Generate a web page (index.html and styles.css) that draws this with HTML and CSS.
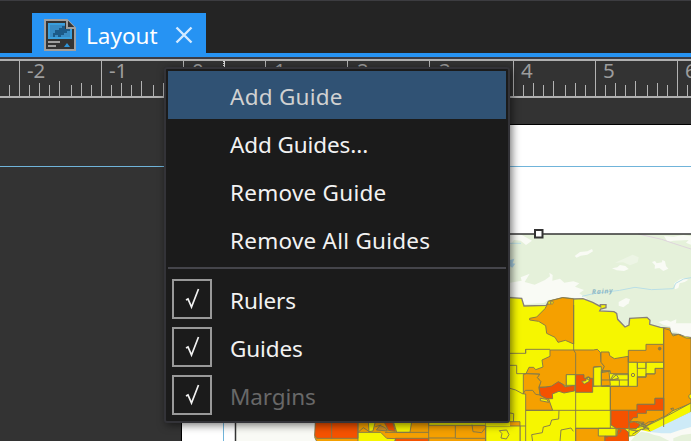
FILE: index.html
```html
<!DOCTYPE html>
<html lang="en">
<head>
<meta charset="utf-8">
<title>Layout</title>
<link rel="stylesheet" href="styles.css">
</head>
<body>
<div class="app">
  <header class="tabs">
    <div class="tab">
      <svg class="tab-icon" width="32" height="32" viewBox="0 0 32 32">
        <path d="M1 1H23L31 9V31H1Z" fill="#333" stroke="#a0a0a0" stroke-width="2"/>
        <path d="M4 4H21V10H28V20H4Z" fill="#3a9fdd"/>
        <path d="M6 6H21V10H26V18H6Z" fill="#388bc4"/>
        <path d="M11 11H15V9H18V7H21V10H26V12H23V14H20V16H17V18H14V16H11V18H9V14H11Z" fill="#1c5a88"/>
        <path d="M23 1V9H31" fill="#333" stroke="#a0a0a0" stroke-width="2"/>
        <path d="M24 2L30 8H24Z" fill="#333"/>
        <path d="M4 23H16M4 27H12" stroke="#a0a0a0" stroke-width="2"/>
        <path d="M20 28L23 24L26 28Z" fill="#2d95db"/>
      </svg>
      <span class="tab-title">Layout</span>
      <svg class="close" width="18" height="18" viewBox="0 0 18 18"><path d="M1.500 1.500L16.500 16.500M16.500 1.500L1.500 16.500" stroke="#d4eaff" stroke-width="2.400"/></svg>
    </div>
  </header>
  <div class="ruler">
    <svg width="691" height="39" viewBox="0 0 691 39">
      <defs>
        <g id="inch" fill="#b3b3b3">
          <path d="M0 2h1v36h-1zM10 26h1v11h-1zM20 24h1v13h-1zM30 26h1v11h-1zM40 22h1v15h-1zM52 26h1v11h-1zM62 24h1v13h-1zM72 26h1v11h-1z"/>
        </g>
      </defs>
      <use href="#inch" x="-63"/><use href="#inch" x="19"/><use href="#inch" x="101"/><use href="#inch" x="183"/><use href="#inch" x="265"/><use href="#inch" x="347"/><use href="#inch" x="429"/><use href="#inch" x="513"/><use href="#inch" x="595"/><use href="#inch" x="677"/>
      <path d="M0 1H691M0 38H691" stroke="#b0b0b0" stroke-width="2"/>
      <path d="M224.500 2V8" stroke="#ddd" stroke-width="1"/><path d="M223.500 2V8" stroke="#ddd" stroke-width="1" stroke-dasharray="1 1"/>
      <g class="ruler-text">
        <text x="27" y="19">-2</text><text x="109" y="19">-1</text><text x="192" y="19">0</text><text x="274" y="19">1</text><text x="357" y="19">2</text><text x="439" y="19">3</text><text x="521" y="19">4</text><text x="603" y="19">5</text><text x="685" y="19">6</text>
      </g>
    </svg>
  </div>
  <main class="canvas">
    <svg width="691" height="343" viewBox="0 98 691 343">
      <rect x="181" y="124" width="520" height="330" fill="#000"/>
      <rect x="182" y="125" width="520" height="330" fill="#fff"/>
      <path d="M0 166.500H691M223.500 125V441" stroke="#70b4da" fill="none"/>
      <rect x="235" y="234" width="470" height="220" fill="#f9faf5"/>
      <g transform="translate(500 220) scale(.33333)">
        <path fill="#e5f1da" d="M0 42H573V450H0Z"/>
        <g fill="#f9fbf5">
          <path d="M30 42H60L75 50 96 62 78 75 62 62 42 60 30 75Z"/>
          <path d="M224 108L240 96 262 94 276 87 279 94 262 104 242 107 230 113Z"/>
          <path d="M336 145L352 142 360 135 376 138 386 147 372 153 350 151Z"/>
          <path d="M456 126L465 123 470 130 486 127 487 120 495 124 498 138 505 146 490 153 478 144 464 146 465 136Z"/>
          <path d="M30 188L65 182 62 172 89 161 74 186 104 194 135 180 150 169 148 158 158 165 157 182 180 176 193 188 220 184 238 190 225 200 252 210 238 220 264 238 205 232 144 240 132 249 70 253 67 234 30 229Z"/>
          <path d="M492 48L520 50 550 45 573 49V74L558 68 566 60 520 62 503 66Z"/>
          <path d="M523 190L540 178 551 175 565 179 554 186 539 190 535 204 525 208Z"/>
          <path d="M356 246L378 234 390 238 386 250 370 262 356 257Z"/>
          <path d="M475 306L500 300 512 305 529 298 528 310 508 319 489 314Z"/>
        </g>
        <path d="M345 128L398 104 416 112 413 127 390 136 370 127Z" fill="#edf5e5"/>
        <path d="M30 70H63M246 229L285 220 359 211 405 202 454 209 520 206 527 190 551 177 573 173" stroke="#b9dfe7" stroke-width="3" fill="none"/>
        <path d="M30 120L43 116 38 130 46 131 37 143 30 139Z" fill="#a9d1e4"/>
        <path d="M415 42L485 58 520 70 548 79 573 87" stroke="#ded4dc" stroke-width="3" fill="none"/>
        <text class="river" x="276" y="223" transform="rotate(-4 276 223)">Rainy</text>
        <path d="M-100 233H30L65 235 72 258 139 256 146 244 188 233 221 237 249 236 278 247 302 260 301 254 318 254 318 263 302 267 299 273 342 275 350 280 353 298 375 321 387 315 389 295 441 292 450 301 449 313 481 322 510 325 511 342 540 344 573 352V670H-100Z" fill="#f6f600" stroke="#888078" stroke-width="4"/>
        <path d="M140 257L148 243 188 233 221 237V372L196 361 174 367 165 352 140 340 137 317 116 304 89 300 89 295 110 291 135 266Z" fill="#f5a000" stroke="#8b7e43" stroke-width="3"/>
        <path d="M144 244h8v9h-8zM154 244l7 2-4 7-6-3z" fill="#f5d500" stroke="#847e5a" stroke-width="2"/>
        <path d="M491 325H509V357L491 340Z" fill="#f5a000"/>
      </g>
      <g transform="translate(500 325) scale(.33333)" stroke="#81784d" stroke-width="2.800" stroke-linejoin="round">
        <path d="M513 18L530 22 556 34 573 35V-5H509Z" fill="#f9faf5" stroke="none"/>
        <g fill="#f5a000">
          <path d="M150 75H280L292 73 301 82 303 110 313 125 305 143 327 139 331 181 280 184V127L303 125 281 126V184H226V149H199V184L176 171 164 184 118 187 121 170 112 157 119 147 78 146 87 127 101 127 107 134 129 126 126 105 150 94Z"/>
          <path d="M78 146L119 148 112 158 123 170 117 185 120 211 146 222 158 256H77V207H70V148Z"/>
          <path d="M303 81H327L329 92 343 101 385 94V146H331V139H306L313 124 303 112Z"/>
          <path d="M331 184H385V157H438V147H465V130H491V256H331Z"/>
          <path d="M385 76H438V58H491V112H385Z"/>
          <path d="M491 10L509 15 519 33 535 28 558 39 573 40V235L519 257 491 277Z"/>
          <path d="M385 256H412V238H465V220H491V275L462 289 440 302 411 290H385Z"/>
          <path d="M227 310H348V333H315V350H227Z"/>
        </g>
        <g fill="#f55200">
          <path d="M117 187H135L155 183 175 170 188 178 195 186 223 181V198L192 204 177 199 157 207 158 221 140 221 121 211Z"/>
          <path d="M226 149H252V160H278V202H226Z"/>
          <path d="M333 256H385V257H411V238H465V220H491V256H439V265H412V278H400L388 292 386 311 350 311 333 300Z"/>
          <path d="M354 310L373 311 385 322 387 350H315V333H351Z"/>
          <path d="M387 293L403 290 420 297 414 311H388Z"/>
        </g>
        <g fill="#f6f600">
          <path d="M199 149H226V181H199ZM281 127L304 125V183H281Z"/>
          <path d="M385 112H412V130H438V112H491V130H465V146H438V155H412V184H385ZM340 149H385V165H331Z"/>
          <path d="M295 310H348V333H295ZM121 220L140 223 146 232 121 227Z"/>
          <path d="M436 305L491 278 573 234V262L455 323Z"/>
          <path d="M387 313L408 312 420 300 438 307 422 318 403 333H387Z"/>
          <path d="M245 169L258 167 259 157 270 158 268 169 253 177Z"/>
          <path d="M573 206L566 212 568 220 573 222"/>
        </g>
        <path stroke="none" fill="#f9faf5" d="M387 350V335L405 332 424 315 447 320 573 305V350Z"/>
        <path stroke="none" fill="#cdeaf7" d="M449 321L573 260V306L538 316 512 325 485 325Z"/>
        <path stroke="none" fill="#e5f1da" d="M391 350L405 333 424 320 447 324 460 329 480 334 512 350ZM520 340L545 330 573 326V350H520Z"/>
        <g fill="none">
          <path d="M221 -60V75L227 85V350M30 85H77V73H150M77 73V85M30 121H50V146H78M30 190L47 195 69 207 76 196 98 196 107 208 120 210M77 256H331M331 184V256M331 256V310H227M77 256V350M30 303H77M177 256L176 282 155 285 150 301 130 306 127 323 95 329 98 350M180 350L183 315 213 309 220 319M0 318H28L24 335 4 338 1 350M30 264L41 266 40 303"/>
          <path d="M304 137H331M304 165H358V184H304V139M412 112V184M438 112V155M491 10V306M385 146V184H304M385 94V112M331 166L349 149 356 160 335 165M409 290L432 292 431 300 446 291 462 289M430 294L414 307 440 302M386 256V292M517 257L512 251 520 249 519 257"/>
          <path d="M421 296L438 302 447 311 423 313 405 322M391 315L413 318 397 328M428 293L430 308 439 307M259 159L267 167M315 333L323 339M354 312L364 317 356 327"/>
          <circle cx="399" cy="150" r="5"/><circle cx="479" cy="71" r="4" fill="#9b773c"/><circle cx="265" cy="159" r="4"/>
        </g>
      </g>
      <g transform="translate(300 400) scale(.33333)" stroke="#81784d" stroke-width="2.800">
        <path d="M47 65H660V130H53L44 112 47 94Z" fill="#f5a000"/>
        <path d="M46 65H174V115H50L44 106Z" fill="#f55200"/>
        <path d="M174 97H242L260 115 288 116 280 130H174ZM205 65H226L219 93 207 95ZM280 65H335L330 97H290L286 83ZM386 65H557V76H386ZM557 78H660V130H557Z" fill="#f6f600"/>
        <path d="M557 60H630V78H557Z" fill="#f6f600" stroke="none"/>
        <path d="M252 65H278L286 94 265 91ZM286 115H386V130H286Z" fill="#f55200"/>
        <path d="M95 65V115M174 65V115M386 65V130M466 78V114H386M466 115H557M557 76V130M516 74L519 95 545 98 555 85M255 97H386M174 97L190 83 208 95M598 92L620 90 627 104 619 117 603 114 606 101Z" fill="none"/>
        <path d="M226 80L240 76 257 84 262 93 229 90 242 74" fill="#cc8b27"/>
      </g>
      <path d="M235.500 450V234H700" fill="none" stroke="#343434" stroke-width="1.500"/>
      <rect x="535" y="230" width="7.500" height="7.500" fill="#fff" stroke="#333" stroke-width="2"/>
    </svg>
  </main>
  <div class="menu">
    <div class="item active"><span class="label">Add Guide</span></div>
    <div class="item"><span class="label compact">Add Guides...</span></div>
    <div class="item"><span class="label">Remove Guide</span></div>
    <div class="item"><span class="label">Remove All Guides</span></div>
    <div class="separator"></div>
    <div class="item"><span class="check"><svg width="36" height="36" viewBox="0 0 36 36"><path d="M12 19L14 18 17.500 26 24.500 8" /></svg></span><span class="label compact">Rulers</span></div>
    <div class="item"><span class="check"><svg width="36" height="36" viewBox="0 0 36 36"><path d="M12 19L14 18 17.500 26 24.500 8" /></svg></span><span class="label compact">Guides</span></div>
    <div class="item disabled"><span class="check"><svg width="36" height="36" viewBox="0 0 36 36"><path d="M12 19L14 18 17.500 26 24.500 8" /></svg></span><span class="label compact">Margins</span></div>
  </div>
</div>
</body>
</html>
```
FILE: styles.css
```css
* { box-sizing: border-box; }
body { margin: 0; font-family: "Noto Sans", "Open Sans", sans-serif; }
svg { display: block; flex: none; }
.app { position: relative; width: 691px; height: 441px; overflow: hidden; background: #333; }
.tabs { height: 57px; padding: 12px 0 0 32px; background: #242424; border-top: 1px solid #3c3c40; border-bottom: 4px solid #2693f3; }
.tab { display: flex; align-items: center; width: 174px; height: 40px; padding-left: 12px; background: #2693f3; color: #fff; }
.tab-icon { margin-top: 4px; }
.tab-title { flex: none; width: 76px; margin-left: 10px; font-size: 22.5px; line-height: 32px; white-space: nowrap; padding-top: 6px; }
.close { margin: 4px 0 0 13px; }
.ruler { height: 41px; border-top: 2px solid #3b3b43; background: #333; }
.ruler-text { font-size: 20.5px; fill: #9d9d9d; }
.canvas { height: 343px; background: #333; }
.river { font: italic bold 20px "Noto Sans", sans-serif; fill: #8fb8c5; letter-spacing: 2.5px; }
.menu { position: absolute; left: 164px; top: 67px; width: 346px; height: 356px; border: 2px solid #333338; border-radius: 3px; background: #1b1b1b; padding: 2px; box-shadow: 2px 2px 8px rgba(0, 0, 0, .55); color: #f2f2f2; }
.item { position: relative; display: flex; align-items: center; height: 48px; padding-left: 62px; font-size: 22.5px; }
.item.active { background: #305274; color: #d1d1d1; }
.item.disabled .label { color: #686868; }
.label { white-space: nowrap; line-height: 32px; padding-top: 3px; letter-spacing: .25px; }
.label.compact { letter-spacing: -.1px; }
.separator { height: 2px; margin: 4px 0 6px; background: #45454b; }
.check { width: 40px; height: 40px; margin: 0 18px 0 -58px; border: 2px solid #999; }
.check path { fill: none; stroke: #f2f2f2; stroke-width: 1.7; }
```
